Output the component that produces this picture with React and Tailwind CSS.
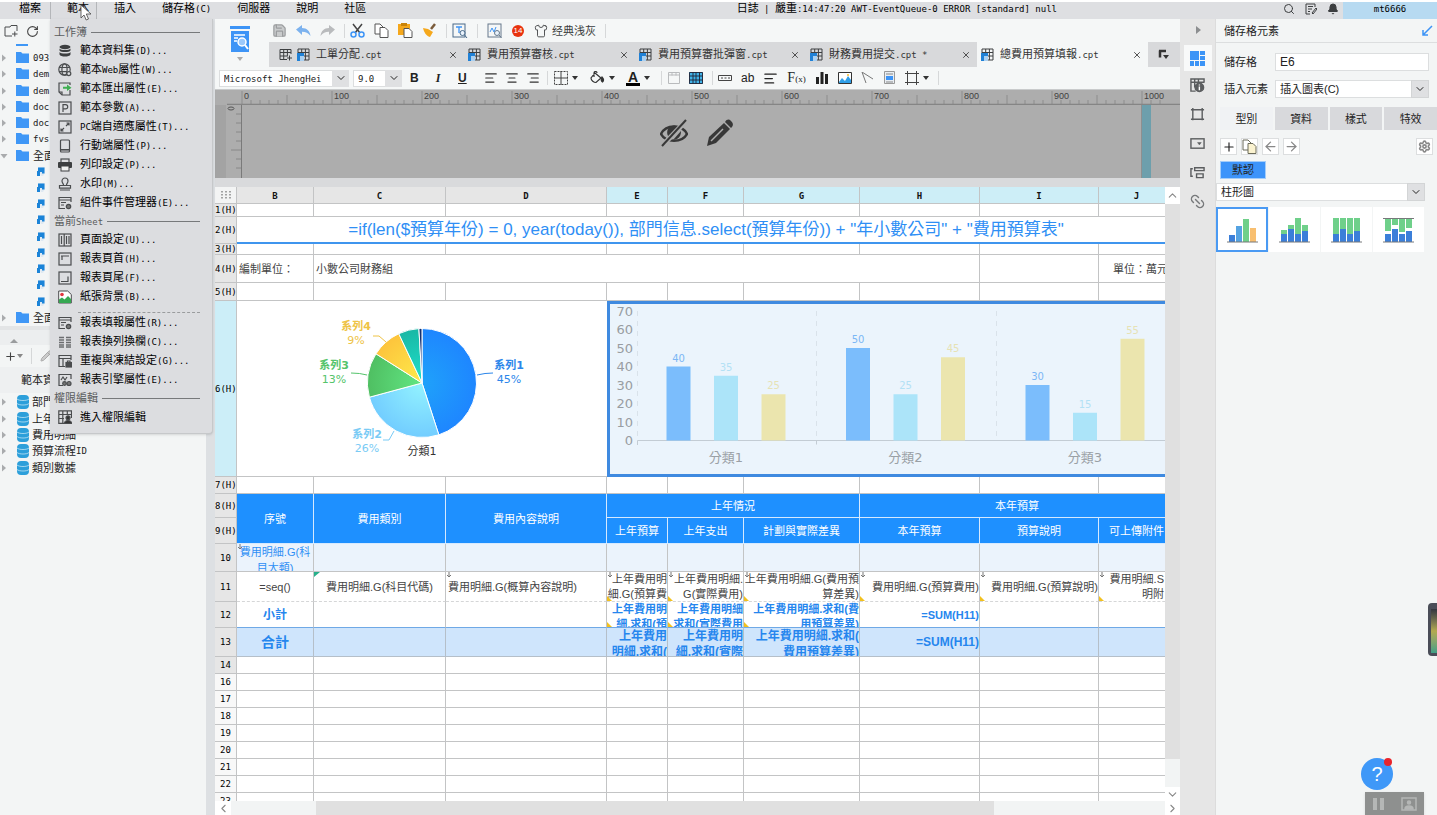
import React from 'react';
import {
  Bell, ChevronDown, ChevronLeft, ChevronRight, ChevronUp, Link2, Pencil,
  RotateCw, Save, Search, Settings, Shirt, X, Plus, ArrowLeft, ArrowRight,
  AlignLeft, AlignCenter, AlignRight,
} from 'lucide-react';

const CJK = "font-['Liberation_Sans','Noto_Sans_CJK_TC',sans-serif]";

// Latin runs are set in a narrow mono face, next to the full-width characters
function T({ children }) {
  return children.split(/([\x20-\x7e]+)/).filter(Boolean).map((part, i) =>
    /^[\x20-\x7e]/.test(part)
      ? <span key={i} className="font-['DejaVu_Sans_Mono',monospace] text-[9px] whitespace-pre">{part}</span>
      : <span key={i}>{part}</span>
  );
}

const MENUS = ['檔案', '範本', '插入', '儲存格(C)', '伺服器', '說明', '社區'];

/* ---------- menu icons ---------- */

const S = { fill: 'none', stroke: '#4a4c4e', strokeWidth: 1.2 };

const menuIcons = {
  db: <g fill="#3d3f41"><ellipse cx="7" cy="3" rx="5.5" ry="2.2" /><path d="M1.5 4.5c1 2 10 2 11 0v2c-1 2-10 2-11 0zM1.5 8c1 2 10 2 11 0v2.4c-1 2.8-10 2.8-11 0z" /></g>,
  web: <g {...S}><circle cx="6.5" cy="6.5" r="5.7" /><ellipse cx="6.5" cy="6.5" rx="2.6" ry="5.7" /><path d="M1 4.5h11M1 8.7h8" /><circle cx="10.8" cy="10.6" r="2" fill="#dcdde0" /></g>,
  export: <g><path d="M12 8v5H4l-3-3V1h11v2" {...S} /><path d="M1 10h3v3" {...S} /><path d="M5 4.7h4V2.5l4.5 3.3L9 9V6.8H5z" fill="#3fae52" /></g>,
  param: <g><rect x="1" y="1" width="12" height="12" {...S} /><path d="M5 11V3.6h2.6a2 2 0 0 1 0 4.2H5" {...S} /></g>,
  resize: <g {...S}><rect x="1" y="1" width="12" height="12" /><path d="M8 6l3-3M8.5 3H11v2.5M6 8l-3 3M3 8.5V11h2.5" /></g>,
  phone: <g {...S}><rect x="2.5" y="1" width="9" height="12" rx="1" /><path d="M2.5 10.8h9" strokeWidth="1.6" /></g>,
  print: <g><rect x="3" y="1" width="8" height="4" {...S} /><rect x="0" y="4" width="14" height="6" rx="1" fill="#3d3f41" /><rect x="3" y="8" width="8" height="5" fill="#f1f1f1" stroke="#3d3f41" /></g>,
  stamp: <g {...S}><path d="M5.5 8c0-1.4-1.5-2-1.5-4a3 3 0 0 1 6 0c0 2-1.5 2.6-1.5 4M1.5 8.5h11v2.6h-11zM2 13h10" /></g>,
  event: <g {...S}><path d="M13 6V1.5H1v11h6M1 4h12M3 6.5h5M3 9h3" /><circle cx="10.5" cy="10.5" r="2.2" fill="#777" /></g>,
  page: <g {...S}><rect x="1" y="1" width="12" height="12" /><path d="M3.5 3v8M6.2 1v12M8.5 3v8M11 3v8" /></g>,
  head: <g {...S}><rect x="1" y="1" width="12" height="12" /><path d="M3 4h8M4 4v4" /></g>,
  foot: <g {...S}><rect x="1" y="1" width="12" height="12" /><path d="M3 10.5h7.5M10 5.5v5" /></g>,
  image: <g><path d="M.7 1h9l3.6 3.5V13H.7z" fill="#fff" stroke="#4a4c4e" /><circle cx="4" cy="4.5" r="1.8" fill="#e2373f" /><path d="M1 13V9.5l3-2 2.5 2L10 6l3 3v4z" fill="#36a852" /></g>,
  cols: <g stroke="#6b6d6f" strokeWidth="1.7"><path d="M1 2.5h5M1 5h5M1 7.5h5M1 10h5M1 12h5M8 2.5h5M8 5h5M8 7.5h5M8 10h5M8 12h5" /></g>,
  freeze: <g {...S}><path d="M13 6V1.5H1v11h6M1 4.5h12M5 4.5v8" /><rect x="8" y="8.5" width="5.5" height="4.5" fill="#4a4c4e" /><path d="M9.5 8.5V7h2.5v1.5" /></g>,
  engine: <g {...S}><path d="M13 6V1.5H1v11h4M3 7l2-3 2 3 2-3" /><circle cx="6.5" cy="10.5" r="1.8" fill="#777" /><circle cx="11" cy="10.5" r="2" fill="#777" /></g>,
  auth: <g {...S}><path d="M13.5 8V.8H.8v12.5H6M.8 4.5h12.7M.8 8.5H6M4.8.8v12.5M9.3.8v4" /><circle cx="10" cy="7.8" r="2" fill="#333" /><path d="M6.5 13.5c0-4 7-4 7 0z" fill="#333" /></g>,
};

const MENU_GROUPS = [
  { title: '工作簿', items: [
    ['db', '範本資料集(D)...'], ['web', '範本Web屬性(W)...'], ['export', '範本匯出屬性(E)...'],
    ['param', '範本參數(A)...'], ['resize', 'PC端自適應屬性(T)...'], ['phone', '行動端屬性(P)...'],
    ['print', '列印設定(P)...'], ['stamp', '水印(M)...'], ['event', '組件事件管理器(E)...'],
  ] },
  { title: '當前Sheet', items: [
    ['page', '頁面設定(U)...'], ['head', '報表頁首(H)...'], ['foot', '報表頁尾(F)...'], ['image', '紙張背景(B)...'],
    null,
    ['event', '報表填報屬性(R)...'], ['cols', '報表換列換欄(C)...'], ['freeze', '重複與凍結設定(G)...'], ['engine', '報表引擎屬性(E)...'],
  ] },
  { title: '權限編輯', items: [['auth', '進入權限編輯']] },
];

function TemplateMenu() {
  return (
    <div className="absolute left-[50px] top-[19px] z-20 w-[163px] h-[415px] bg-[#dcdde0] rounded-br border-b border-r border-[#c6c8ca] pt-1 shadow-sm">
      {MENU_GROUPS.map(group => (
        <section key={group.title}>
          <h3 className="flex items-center gap-1 pl-1 pr-3 h-[18px] text-[#5a5c5e]">
            <span><T>{group.title}</T></span><span className="flex-1 h-px bg-[#77797b]" />
          </h3>
          {group.items.map((item, i) => item ? (
            <button key={i} className="flex items-center w-full h-[19px] pl-2 gap-2 text-left text-black whitespace-nowrap">
              <svg className="w-3.5 h-3.5 shrink-0" viewBox="0 0 14 14">{menuIcons[item[0]]}</svg>
              <span><T>{item[1]}</T></span>
            </button>
          ) : <div key={i} className="h-[7px] ml-7 mr-3 border-b border-dashed border-[#9a9c9e]" />)}
        </section>
      ))}
    </div>
  );
}

function MenuBar() {
  return (
    <header className="relative flex items-center h-[17px] shrink-0 mt-0.5 bg-[#dedfe2] text-black">
      <nav className="flex flex-1 pl-0.5 h-full">
        {MENUS.map((m, i) => (
          <button key={m} className={i === 1
            ? 'pl-4 pr-[7px] pb-1 leading-[13px] border-x border-[#b4b6b9] bg-[#dcdde0] whitespace-nowrap'
            : 'pl-[17px] pr-[9px] pb-1 leading-[13px] whitespace-nowrap'}><T>{m}</T></button>
        ))}
      </nav>
      <p className="leading-[13px] mb-1 mr-[226px] whitespace-nowrap"><T>{'日誌 | 嚴重:14:47:20 AWT-EventQueue-0 ERROR [standard] null'}</T></p>
      <div className="flex items-center gap-2.5 mr-1 pb-1 text-[#3c3e40]">
        <button aria-label="search"><Search size={12} /></button>
        <button aria-label="notes">
          <svg className="w-3 h-3" viewBox="0 0 12 12" fill="none" stroke="#3c3e40"><path d="M10 4V1H1v10h4M3 3.5h5M3 6h4M3 8.5h2M7 10l4-5 1 1-4 5z" /></svg>
        </button>
        <button aria-label="alerts"><Bell size={12} fill="#3c3e40" /></button>
      </div>
      <button className="w-[94px] h-full pb-1 bg-[#b7daf1] leading-[13px]"><T>mt6666</T></button>
      <svg className="absolute left-20 top-0.5 z-30 w-3 h-[18px]" viewBox="0 0 12 18"><path d="M1 1v13l3-3 2.2 5 2.3-1-2.2-5H11z" fill="#fff" stroke="#444" strokeWidth=".8" /></svg>
    </header>
  );
}

/* ---------- left ---------- */

function Twist({ open }) {
  return (
    <svg className="w-2 h-2 shrink-0" viewBox="0 0 8 8" fill="#a9abad">
      <path d={open ? 'M.5 2h7L4 6.5z' : 'M2 .5v7L6 4z'} />
    </svg>
  );
}

function Folder() {
  return <svg className="w-3.5 h-3 ml-2 mr-[3px] shrink-0" viewBox="0 0 14 12"><path d="M0 0h5l1.5 1.5H13V11H0z" fill="#3f97f6" /></svg>;
}

function Report() {
  return (
    <svg className="w-2.5 h-2.5 ml-9" viewBox="0 0 10 10">
      <path d="M2 0h7v6L7 9H5z" fill="#dfe9f2" /><path d="M2 .5h6.5v6H6V5H4v4H1V4h1z" fill="#1b84d8" />
    </svg>
  );
}

const TREE = ['093', 'dem', 'dem', 'doc', 'doc', 'fvs', '全面'];
const DATASETS = ['部門信息', '上年費用明細', '費用明細', '預算流程ID', '類別數據'];

function LeftPane() {
  return (
    <aside className="w-[206px] shrink-0 flex flex-col bg-[#f3f5f5] text-[#222]">
      <div className="flex items-center gap-2 h-6 pl-1 text-[#444]">
        <button aria-label="new folder">
          <svg className="w-3.5 h-3.5" viewBox="0 0 14 14" fill="none" stroke="#4a4c4e"><path d="M8 12H1V3h5l1-1.5h6V7M8 10h5.5M10.8 7.5v5" /></svg>
        </button>
        <button aria-label="refresh"><RotateCw size={13} /></button>
      </div>
      <div className="flex items-start h-[7px] pl-4 pt-px"><span className="w-3 h-0.5 bg-[#3f97f6]" /></div>
      <ul className="flex flex-col h-[276px]">
        {TREE.map((t, i) => (
          <li key={i} className="flex flex-1 items-center"><Twist open={i === 6} /><Folder /><T>{t}</T></li>
        ))}
        {Array.from({ length: 9 }, (_, i) => <li key={i} className="flex flex-1 items-center"><Report /></li>)}
        <li className="flex flex-1 items-center"><Twist /><Folder />全面</li>
      </ul>
      <div className="flex items-end h-[19px] pl-2.5 pb-px border-t-4 border-[#e3e5e6] bg-[#eceeef]">
        <svg className="w-2 h-1.5" viewBox="0 0 8 6"><path d="M0 5l4-4 4 4z" fill="#9a9c9e" /></svg>
      </div>
      <div className="flex items-center h-[22px] pl-1 gap-1 text-[#444]">
        <button className="flex items-center" aria-label="add dataset"><Plus size={13} /><svg className="w-1.5 h-1" viewBox="0 0 6 4"><path d="M0 0h6L3 4z" fill="#888" /></svg></button>
        <span className="w-px h-4 ml-1 mr-1 bg-[#d5d7d8]" />
        <button aria-label="edit"><Pencil size={12} color="#aaa" fill="#ccc" /></button>
      </div>
      <h2 className="h-[26px] pl-[21px] leading-[26px] bg-[#eef0f1]">範本資料集</h2>
      <ul className="flex flex-col mt-px h-[82px]">
        {DATASETS.map(d => (
          <li key={d} className="flex flex-1 items-center">
            <Twist />
            <svg className="w-3.5 h-3.5 ml-2 mr-0.5 shrink-0" viewBox="0 0 14 14">
              <rect x="1" y="0" width="12" height="14" rx="4" fill="#2c9fda" /><path d="M1 4c2 2 10 2 12 0M1 8.5c2 2 10 2 12 0" fill="none" stroke="#bfe3f4" strokeWidth=".8" />
            </svg>
            <T>{d}</T>
          </li>
        ))}
      </ul>
    </aside>
  );
}

/* ---------- toolbars ---------- */

const Sep = () => <span className="w-px h-3.5 bg-[#d6d8d9]" />;
const Caret = () => <svg className="w-1.5 h-1 ml-1" viewBox="0 0 6 4"><path d="M0 0h6L3 4z" fill="#333" /></svg>;

function CptIcon({ add }) {
  return (
    <svg className="w-[13px] h-[13px] shrink-0" viewBox="0 0 13 13">
      <path d={add ? 'M8 11.5H1v-10h11V6M1 4.5h11M1 8h7M4.7 1.5v10M8.4 1.5v7M8 10h5M10.5 7.5v5' : 'M1 1h11v11H1zM1 4.5h11M1 8h11M4.7 1v11M8.4 1v11'} fill="none" stroke="#3d3f41" />
      {!add && <path d="M0 5h7v3H3v5H0z" fill="#2081d6" />}
      {!add && <path d="M3 8h4v5H3z" fill="#a9d0f2" />}
    </svg>
  );
}

const TABS = ['工單分配.cpt', '費用預算審核.cpt', '費用預算審批彈窗.cpt', '財務費用提交.cpt *', '總費用預算填報.cpt'];

function TopTools() {
  return (
    <div className="flex h-[48px] bg-[#f5f7f7]">
      <div className="w-[54px] flex flex-col items-center pt-1.5">
        <button aria-label="preview" className="flex flex-col items-center mr-1">
          <svg className="w-5 h-7" viewBox="0 0 20 28">
            <path d="M0 1h20v3H0zM1 6h18v21H1z" fill="#3d94f6" />
            <path d="M4 10h11M4 13h4M4 16h3" stroke="#fff" strokeWidth="1.5" />
            <circle cx="12" cy="17" r="4" fill="#9cc9fb" stroke="#fff" strokeWidth="1.5" /><path d="M15 20l3 4" stroke="#fff" strokeWidth="2" />
          </svg>
          <svg className="w-1.5 h-1 mt-1" viewBox="0 0 6 4"><path d="M0 0h6L3 4z" fill="#aaa" /></svg>
        </button>
      </div>
      <div className="flex-1 min-w-0">
        <div className="flex items-center h-[23px] pl-[3px] gap-[9px] text-[#3c3e40]">
          <button aria-label="save" className="w-[15px]"><Save size={15} color="#9b9d9f" fill="#c9cbcc" /></button>
          <button aria-label="undo"><svg className="w-[15px] h-3" viewBox="0 0 15 12"><path d="M0 4.5L6 0v3c5 0 8 3 8.5 8C12 8 10 6.8 6 6.8V10z" fill="#7cb2ee" /></svg></button>
          <button aria-label="redo"><svg className="w-[15px] h-3" viewBox="0 0 15 12"><path d="M15 4.5L9 0v3C4 3 1 6 .5 11 3 8 5 6.8 9 6.8V10z" fill="#b9bbbd" /></svg></button>
          <Sep />
          <button aria-label="cut" className="-ml-1"><svg className="w-[15px] h-[15px]" viewBox="0 0 15 15" fill="none"><path d="M3 1l7 9M12 1L5 10" stroke="#444" strokeWidth="1.5" /><circle cx="3.5" cy="11.5" r="2.5" stroke="#3d94f6" strokeWidth="1.5" /><circle cx="11.5" cy="11.5" r="2.5" stroke="#3d94f6" strokeWidth="1.5" /></svg></button>
          <button aria-label="copy"><svg className="w-[15px] h-[15px]" viewBox="0 0 15 15" fill="#fff" stroke="#555"><path d="M1 1h5l3 3v7H1z" /><path d="M6 4.5h5l3 3v7H6z" /></svg></button>
          <button aria-label="paste"><svg className="w-[15px] h-[15px]" viewBox="0 0 15 15"><path d="M0 1h12v11H0z" fill="#f5a81c" /><path d="M3 0h6v3H3z" fill="#c98308" /><path d="M6 5.5h5l3 3v6H6z" fill="#fff" stroke="#555" /></svg></button>
          <button aria-label="format brush"><svg className="w-[15px] h-[15px]" viewBox="0 0 15 15"><path d="M9 6l4-5" stroke="#7a5b3a" strokeWidth="2.5" /><path d="M1 5l5 1 5 3-3 5C4 13 2 9 1 5z" fill="#f5a81c" /></svg></button>
          <Sep />
          <button aria-label="find text" className="-ml-1"><svg className="w-4 h-4" viewBox="0 0 16 16" fill="none" stroke="#4a6a8a"><rect x="1" y="1" width="12" height="13" /><path d="M4 4h6M7 4v6" stroke="#3d94f6" strokeWidth="1.3" /><circle cx="10.5" cy="10" r="2.5" fill="#eaf3fc" /><path d="M12.5 12l2.5 3" /></svg></button>
          <Sep />
          <button aria-label="diagnose"><svg className="w-4 h-4" viewBox="0 0 16 16" fill="none" stroke="#66798c"><rect x="1" y="1" width="13" height="13" /><path d="M3 9l2-4 2 4 2-5" stroke="#3d94f6" /><circle cx="10" cy="10" r="2.5" fill="#eaf3fc" /><path d="M12 12l2.5 3" /></svg></button>
          <span className="w-3 h-3 rounded-full bg-[#e8330f] text-white text-[8px] leading-3 text-center">14</span>
          <button className="flex items-center gap-1 ml-px"><Shirt size={14} strokeWidth={1.5} /><span className="whitespace-nowrap">经典浅灰</span></button>
          <Sep />
        </div>
        <div className="flex items-center h-[25px] bg-[#d8d9db] text-[#333]">
          <button className="w-6 flex justify-center pl-2" aria-label="new sheet"><CptIcon add /></button>
          {TABS.map((t, i) => (
            <div key={t} className={i === 4
              ? 'flex items-center w-[171px] h-full pl-1 pr-1.5 bg-[#f5f7f7]'
              : 'flex items-center w-[171px] h-full pl-1 pr-1.5'}>
              <CptIcon />
              <button className="flex-1 pl-1.5 text-left whitespace-nowrap"><T>{t}</T></button>
              <button aria-label="close"><X size={10} /></button>
            </div>
          ))}
          <button className="ml-2.5" aria-label="tab list"><svg className="w-3 h-3" viewBox="0 0 12 12"><path d="M1 2h7M2 1.5v7" stroke="#333" strokeWidth="2.5" /><path d="M5 6h6L8 10z" fill="#333" /></svg></button>
        </div>
      </div>
    </div>
  );
}

function FormatBar() {
  return (
    <div className="flex items-center h-[23px] pl-1 bg-[#f5f7f7] border-b border-[#c9cbcc] text-[#222]">
      <span className="relative flex">
        <select aria-label="font" className="appearance-none w-[130px] h-[17px] pl-1 border border-[#dcdedf] bg-white font-['DejaVu_Sans_Mono',monospace] text-[9px]"><option>Microsoft JhengHei</option></select>
        <span className="absolute right-0 inset-y-0 w-[17px] flex items-center justify-center bg-[#dfe0e2] pointer-events-none"><ChevronDown size={12} /></span>
      </span>
      <span className="relative flex ml-1">
        <select aria-label="font size" className="appearance-none w-[49px] h-[17px] pl-1 border border-[#dcdedf] bg-white font-['DejaVu_Sans_Mono',monospace] text-[9px]"><option>9.0</option></select>
        <span className="absolute right-0 inset-y-0 w-[17px] flex items-center justify-center bg-[#dfe0e2] pointer-events-none"><ChevronDown size={12} /></span>
      </span>
      <div className="flex items-center gap-4 ml-2 text-xs">
        <button className="w-2 font-bold">B</button>
        <button className="w-2 italic font-bold font-['Liberation_Serif',serif]">I</button>
        <button className="w-2 underline font-bold">U</button>
      </div>
      <div className="flex items-center gap-[7px] ml-[18px] text-[#333]">
        <button aria-label="align left"><AlignLeft size={14} /></button>
        <button aria-label="align center"><AlignCenter size={14} /></button>
        <button aria-label="align right"><AlignRight size={14} /></button>
        <Sep />
      </div>
      <div className="flex items-center gap-[11px] ml-1.5">
        <button className="flex items-center" aria-label="borders"><svg className="w-3.5 h-3.5" viewBox="0 0 14 14" fill="none" stroke="#444"><path d="M.5.5h13v13H.5z" strokeDasharray="2 1" /><path d="M7 0v14M0 7h14" /></svg><Caret /></button>
        <button className="flex items-center" aria-label="fill"><svg className="w-4 h-3.5" viewBox="0 0 16 14" fill="none" stroke="#333" strokeWidth="1.2"><path d="M6 2l6 5-5 4.5c-2 0-5-2-5-4.5zM5 6V2c0-2 3-2 3 0" /><path d="M13 6c2 2 2 4 .5 5C12 10 12 8 13 6z" fill="#333" /></svg><Caret /></button>
        <button className="flex items-center" aria-label="text colour"><span className="w-3.5 border-b-3 border-black text-sm leading-3 font-bold">A</span><Caret /></button>
        <Sep />
      </div>
      <div className="flex items-center gap-[9px] ml-1.5">
        <button aria-label="merge"><svg className="w-3 h-3" viewBox="0 0 12 12" fill="none" stroke="#b9bbbd"><path d="M.5.5h11v11H.5zM.5 3h11M4 .5v3M8 .5v3" /></svg></button>
        <button aria-label="table"><svg className="w-3.5 h-3" viewBox="0 0 14 12"><path d="M0 0h14v12H0z" fill="#3fb2e8" /><path d="M.5.5h13v11H.5zM.5 4h13M.5 8h13M4 .5v11M7 .5v11M10.5.5v11" fill="none" stroke="#223" strokeWidth=".9" /></svg></button>
        <Sep />
        <button aria-label="field" className="-ml-1"><svg className="w-3.5 h-1.5" viewBox="0 0 14 6" fill="none" stroke="#444"><path d="M.5.5h13v5H.5zM3 3h2M6.5 3h2M10 3h2" /></svg></button>
        <button className="text-xs leading-3">ab</button>
        <button aria-label="rich text"><AlignLeft size={15} /></button>
        <button className="font-['Liberation_Serif',serif] text-sm leading-3">F<span className="text-[9px]">(x)</span></button>
        <button aria-label="chart"><svg className="w-3.5 h-3.5" viewBox="0 0 14 14" fill="#222"><path d="M1 6h3v7H1zM5.5 1h3v12h-3zM10 3h3v10h-3z" /></svg></button>
        <button aria-label="picture"><svg className="w-3.5 h-3" viewBox="0 0 14 12"><path d="M.5.5h13v11H.5z" fill="#fff" stroke="#333" /><path d="M1 10l3-4 3 3 3-5 3 4v3H1z" fill="#2f9fe8" /><circle cx="10" cy="3" r="1" fill="#f5b72c" /></svg></button>
        <button aria-label="slope line"><svg className="w-3.5 h-3" viewBox="0 0 14 12" fill="none" stroke="#777"><path d="M1 0l11 7M1 0l4 11" /></svg></button>
        <button aria-label="sub report"><svg className="w-3 h-3.5" viewBox="0 0 12 14"><path d="M.5.5h10v12H.5z" fill="#e9eef3" stroke="#999" /><path d="M2 3h7M2 11h7" stroke="#888" /><path d="M2 5h7v4H2z" fill="#3d94f6" /></svg></button>
        <button className="flex items-center" aria-label="widget"><svg className="w-3.5 h-3.5" viewBox="0 0 14 14" fill="none" stroke="#444"><path d="M2.5 0v14M11.5 0v14M0 2.5h14M0 11.5h14" /></svg><Caret /></button>
        <Sep />
      </div>
    </div>
  );
}

/* ---------- parameter pane ---------- */

function Ruler() {
  const ticks = Array.from({ length: 103 }, (_, i) => i);
  return (
    <svg className="block w-full h-[15px]" fill="#3f3f3f">
      <path d={ticks.map(i => `M${27 + i * 9} ${i % 10 === 0 ? 1 : i % 5 === 0 ? 5 : 10}V15`).join('')} stroke="#858585" strokeWidth=".8" />
      {Array.from({ length: 11 }, (_, i) => (
        <text key={i} x={29 + i * 90} y="9" fontSize="9" fontFamily="Liberation Sans">{i * 100}</text>
      ))}
      <path d="M12 14.5H1000" stroke="#858585" strokeWidth="1.5" />
    </svg>
  );
}

function ParameterPane() {
  return (
    <div className="bg-[#adadad]">
      <Ruler />
      <div className="flex h-[73px]">
        <div className="w-[11px] bg-[#a3a3a3]" />
        <svg className="w-4 h-full" viewBox="0 0 16 73">
          <ellipse cx="5" cy="3.5" rx="3" ry="1.5" fill="none" stroke="#555" />
          <path d="M10 9h5M10 18h5M10 27h5M10 36h5M5 45h10M10 54h5M10 63h5" stroke="#888" /><path d="M15.5 0v73" stroke="#7a7a7a" />
        </svg>
        <div className="flex flex-1 justify-center gap-[18px] pt-3.5 pl-2.5 border-r border-[#8f8f8f] text-[#383838]">
          <button className="h-7" aria-label="hide">
            <svg className="w-7 h-7" viewBox="0 0 28 28"><path d="M1 15C6 5 22 5 27 15 22 24 6 24 1 15z" fill="none" stroke="#383838" strokeWidth="2.5" /><path d="M8 10c-2 4 0 8 2 9L20 9c-4-4-9-3-12 1zM17 20c3-2 4-4 4-8l-8 9z" fill="#383838" /><path d="M26 2L2 27" stroke="#adadad" strokeWidth="5" /><path d="M26 1L2 27" stroke="#383838" strokeWidth="2" /></svg>
          </button>
          <button className="h-7" aria-label="edit">
            <svg className="w-7 h-7" viewBox="0 0 28 28"><path d="M1 27l2-9L18 4l6 6L10 24z" fill="#383838" /><path d="M19 3c2-3 4-3 6-1s3 4 0 7z" fill="#383838" /><path d="M5 22L17 10" stroke="#adadad" strokeWidth="1.5" /></svg>
          </button>
        </div>
        <div className="w-[9px] mr-[29px] bg-[#6d9fac]" />
      </div>
      <div className="h-[9px] bg-[#d9dadc]" />
    </div>
  );
}

/* ---------- charts ---------- */

const SLICES = [
  { from: 0, to: 45, a: '#1fa2fa', b: '#1e86ff', name: '系列1', x: 272, y: 68, line: 'M240 74q8-2 16-2' },
  { from: 45, to: 70.8, a: '#93f3ff', b: '#72cdff', name: '系列2', x: 130, y: 137, line: 'M157 130l-5 9h-6' },
  { from: 70.8, to: 84, a: '#62e683', b: '#4fbf62', name: '系列3', x: 97, y: 68, line: 'M130 74q-7-2-16-2' },
  { from: 84, to: 93, a: '#fdeb4b', b: '#fdc43c', name: '系列4', x: 119, y: 29, line: 'M149 41l-7-6h-6' },
  { from: 93, to: 99.1, a: '#1fe0cb', b: '#19b8a5' },
  { from: 99.1, to: 100, a: '#173a8c', b: '#14306e' },
];
const LABEL_COLORS = ['#2b86ea', '#79cbf5', '#55c46b', '#eec346'];

function PieChart() {
  const cx = 185, cy = 82, r = 54.5;
  const pt = p => {
    const t = (p / 100) * Math.PI * 2;
    return `${cx + r * Math.sin(t)} ${cy - r * Math.cos(t)}`;
  };
  return (
    <svg className="block w-[369px] h-[175px]" viewBox="0 0 369 175" fontFamily="DejaVu Sans, Noto Sans CJK TC" textAnchor="middle">
      {SLICES.map((s, i) => (
        <g key={i}>
          <radialGradient id={`slice${i}`} gradientUnits="userSpaceOnUse" cx={cx} cy={cy} r={r}>
            <stop offset="0" stopColor={s.a} /><stop offset="1" stopColor={s.b} />
          </radialGradient>
          <path d={`M${cx} ${cy}L${pt(s.from)}A${r} ${r} 0 0 1 ${pt(s.to)}z`} fill={`url(#slice${i})`} stroke="#fff" />
          {s.name && (
            <g fill={LABEL_COLORS[i]} fontSize="11">
              <path d={s.line} fill="none" stroke={LABEL_COLORS[i]} />
              <text x={s.x} y={s.y} fontWeight="bold">{s.name}</text>
              <text x={s.x} y={s.y + 14}>{[45, 26, 13, 9][i]}%</text>
            </g>
          )}
        </g>
      ))}
      <text x="185" y="154" fontSize="11" fill="#333">分類1</text>
    </svg>
  );
}

const GROUPS = [[40, 35, 25], [50, 25, 45], [30, 15, 55]];
const BAR_COLORS = ['#7bbdfc', '#ace4f9', '#ebe5ae'];
const VALUE_COLORS = ['#7bb7f5', '#b3e1f5', '#e6e2b4'];

function BarChart() {
  return (
    <svg className="block w-full h-full" viewBox="3 3 565 170" preserveAspectRatio="xMinYMin slice" fontFamily="DejaVu Sans, Noto Sans CJK TC">
      <path d="M30.5 10v130M209.5 10v130M389.5 10v130" stroke="#d9e2ea" strokeDasharray="5 5" />
      <path d="M30.5 144v-4.5H568M209.5 139.5v4" fill="none" stroke="#c3ccd4" />
      {[0, 10, 20, 30, 40, 50, 60, 70].map(v => (
        <text key={v} x="26" y={144 - v * 1.85} fontSize="13" fill="#989da2" textAnchor="end">{v}</text>
      ))}
      {GROUPS.map((g, i) => (
        <g key={i} textAnchor="middle">
          {g.map((v, j) => (
            <g key={j}>
              <rect x={59.5 + i * 179.5 + j * 47.5} y={139.5 - v * 1.85} width="24" height={v * 1.85} fill={BAR_COLORS[j]} />
              <text x={71.5 + i * 179.5 + j * 47.5} y={134.5 - v * 1.85} fontSize="10" fill={VALUE_COLORS[j]}>{v}</text>
            </g>
          ))}
          <text x={119 + i * 179.5} y="161" fontSize="13" fill="#9aa0a5">{`分類${i + 1}`}</text>
        </g>
      ))}
    </svg>
  );
}

/* ---------- sheet ---------- */

const GRID = 'relative p-0 border-r border-b border-[#c3c4c5] overflow-hidden';
const HEAD = 'p-0 border-r border-b border-[#d5e9ff] bg-[#1e90ff] text-white text-center font-normal whitespace-nowrap';
const PALE = 'relative p-0 border-r border-b border-[#c3c4c5] bg-[#ebf3fc] text-[#2f8ff5] overflow-hidden';
const TOTAL = 'relative p-0 border-r border-b border-[#b5bfc9] bg-[#cfe5fc] text-[#2586ee] overflow-hidden';
const DETAIL = 'relative p-0 border-r border-b border-r-[#c3c4c5] border-b-[#d5d6d7] [border-bottom-style:dashed] overflow-hidden';
const SUB = 'relative p-0 border-r border-b border-r-[#c3c4c5] border-b-[#6fa9e6] text-[#2586ee] overflow-hidden';
const COLS = ['w-[22px]', 'w-[77px]', 'w-[132px]', 'w-[161px]', 'w-[61px]', 'w-[76px]', 'w-[116px]', 'w-[120px]', 'w-[119px]', 'w-[76px]'];

const ROW_HEADS = {
  plain: 'p-0 border-r border-b border-[#c3c4c5] bg-[#e6e6e6]',
  active: 'p-0 border-r border-b border-[#c3c4c5] bg-[#cceef8]',
  light: 'p-0 border-r border-b border-[#c3c4c5] bg-[#f8f8f8]',
};

function RowHead({ children, tone = 'plain' }) {
  return (
    <th scope="row" className={ROW_HEADS[tone]}>
      <div className="text-center text-[9px] leading-[10px] font-normal whitespace-nowrap text-black font-['DejaVu_Sans_Mono',monospace]">{children}</div>
    </th>
  );
}

function Blank({ n = 9, cell = GRID }) {
  return Array.from({ length: n }, (_, i) => <td key={i} className={cell} />);
}

const Arrow = () => <svg className="absolute left-0 top-0 w-1.5 h-1.5" viewBox="0 0 6 6" fill="none" stroke="#777"><path d="M3 0v5M1 3l2 2 2-2" /></svg>;
const Corner = () => <svg className="absolute left-0 bottom-0 w-[5px] h-[5px]" viewBox="0 0 5 5"><path d="M0 0l5 5H0z" fill="#f2c11f" /></svg>;

function Lines({ rows, className }) {
  return <div className={className}>{rows.map(r => <div key={r} className="flex justify-end whitespace-nowrap">{r}</div>)}</div>;
}

function Sheet() {
  return (
    <table className="table-fixed border-separate border-spacing-0 w-[960px] text-[#444] leading-3">
      <colgroup>{COLS.map((c, i) => <col key={i} className={c} />)}</colgroup>
      <thead>
        <tr className="h-[17px] text-[#111]">
          <th className="p-0 border-r border-b border-[#c3c4c5] bg-[#f3f4f4]">
            <svg className="block w-3 h-2 mx-auto" viewBox="0 0 12 8" stroke="#888" strokeWidth="1.5" strokeDasharray="1.5 1.5"><path d="M2 0v8M6 0v8M10 0v8" /></svg>
          </th>
          {'BCDEFGHIJ'.split('').map((c, i) => (
            <th key={c} className={i > 2
              ? 'p-0 border-r border-b border-[#c3c4c5] bg-[#cdeef7]'
              : 'p-0 border-r border-b border-[#c3c4c5] bg-[#e6e6e6]'}><T>{c}</T></th>
          ))}
        </tr>
      </thead>
      <tbody>
        <tr className="h-[13px]"><RowHead>1(H)</RowHead><Blank /></tr>
        <tr className="h-[27px]">
          <RowHead>2(H)</RowHead>
          <td colSpan={9} className="p-0 border-b-2 border-[#3f95ee] text-center text-[17px] leading-6 text-[#2f8ff5] whitespace-nowrap">
            {'=if(len($預算年份) = 0, year(today()), 部門信息.select(預算年份)) + "年小數公司" + "費用預算表"'}
          </td>
        </tr>
        <tr className="h-[11px]"><RowHead>3(H)</RowHead><Blank /></tr>
        <tr className="h-[28px]">
          <RowHead>4(H)</RowHead>
          <td className={GRID}><div className="pl-0.5">編制單位：</div></td>
          <td colSpan={6} className={GRID}><div className="pl-0.5">小數公司財務組</div></td>
          <td className={GRID} />
          <td className={GRID}><div className="flex justify-end pr-1.5 whitespace-nowrap">單位：萬元</div></td>
        </tr>
        <tr className="h-[18px]"><RowHead>5(H)</RowHead><Blank /></tr>
        <tr className="h-[176px]">
          <RowHead tone="active">6(H)</RowHead>
          <td colSpan={3} className="p-0 border-b border-[#c3c4c5] bg-white"><PieChart /></td>
          <td colSpan={6} className="p-0"><div className="h-[176px] border-3 border-r-0 border-[#3f8ae0] bg-[#ebf4fc]"><BarChart /></div></td>
        </tr>
        <tr className="h-[17px]"><RowHead>7(H)</RowHead><Blank /></tr>
        <tr className="h-[24px]">
          <RowHead>8(H)</RowHead>
          <td rowSpan={2} className={HEAD}>序號</td>
          <td rowSpan={2} className={HEAD}>費用類別</td>
          <td rowSpan={2} className={HEAD}>費用內容說明</td>
          <td colSpan={3} className={HEAD}>上年情況</td>
          <td colSpan={3} className={HEAD}>本年預算</td>
        </tr>
        <tr className="h-[26px]">
          <RowHead>9(H)</RowHead>
          {['上年預算', '上年支出', '計劃與實際差異', '本年預算', '預算說明', '可上傳附件'].map((h, i) => <td key={i} className={HEAD}>{h}</td>)}
        </tr>
        <tr className="h-[28px]">
          <RowHead>10</RowHead>
          <td className={PALE}><Arrow /><div className="h-[27px] overflow-hidden text-center leading-4 whitespace-nowrap">費用明細.G(科<br />目大類)</div></td>
          <Blank n={8} cell={PALE} />
        </tr>
        <tr className="h-[30px]">
          <RowHead>11</RowHead>
          <td className={DETAIL}><div className="text-center">=seq()</div></td>
          <td className={DETAIL}><svg className="absolute left-0 top-0 w-1.5 h-1.5" viewBox="0 0 6 6"><path d="M0 0h6L0 5z" fill="#27b08b" /></svg><div className="text-center">費用明細.G(科目代碼)</div></td>
          <td className={DETAIL}><Arrow /><div className="pl-0.5 whitespace-nowrap">費用明細.G(概算內容說明)</div></td>
          {[['上年費用明', '細.G(預算費'], ['上年費用明細.', 'G(實際費用)'], ['上年費用明細.G(費用預', '算差異)']].map((rows, i) => (
            <td key={i} className={DETAIL}><Arrow /><Corner /><Lines rows={rows} className="h-[29px] overflow-hidden leading-[15px]" /></td>
          ))}
          <td className={DETAIL}><Arrow /><Corner /><Lines rows={['費用明細.G(預算費用)']} /></td>
          <td className={DETAIL}><Arrow /><Corner /><Lines rows={['費用明細.G(預算說明)']} /></td>
          <td className={DETAIL}><Arrow /><Corner /><Lines rows={['費用明細.S', '明附']} className="h-[29px] overflow-hidden pr-2.5 leading-[15px]" /></td>
        </tr>
        <tr className="h-[26px] font-bold">
          <RowHead>12</RowHead>
          <td className={SUB}><div className="text-center text-xs">小計</div></td>
          <Blank n={2} cell={SUB} />
          {[['上年費用明', '細.求和(預'], ['上年費用明細', '求和(實際費用'], ['上年費用明細.求和(費', '用預算差異)']].map((rows, i) => (
            <td key={i} className={SUB}><Corner /><Lines rows={rows} className="h-[25px] overflow-hidden leading-[15px]" /></td>
          ))}
          <td className={SUB}><Lines rows={['=SUM(H11)']} /></td>
          <Blank n={2} cell={SUB} />
        </tr>
        <tr className="h-[29px] font-bold">
          <RowHead>13</RowHead>
          <td className={TOTAL}><div className="text-center text-sm">合計</div></td>
          <Blank n={2} cell={TOTAL} />
          {[['上年費用', '明細.求和('], ['上年費用明', '細.求和(實際'], ['上年費用明細.求和(', '費用預算差異)']].map((rows, i) => (
            <td key={i} className={TOTAL}><Lines rows={rows} className="h-[28px] overflow-hidden text-xs leading-4" /></td>
          ))}
          <td className={TOTAL}><Lines rows={['=SUM(H11)']} className="text-xs" /></td>
          <Blank n={2} cell={TOTAL} />
        </tr>
        {['14', '16', '17', '18', '19', '20', '21', '22', '23'].map(n => (
          <tr key={n} className="h-[17px]"><RowHead tone={n === '14' ? 'plain' : 'light'}>{n}</RowHead><Blank /></tr>
        ))}
      </tbody>
    </table>
  );
}

function Designer() {
  return (
    <main className="flex-1 min-w-0 flex flex-col bg-white">
      <TopTools />
      <FormatBar />
      <ParameterPane />
      <div className="flex flex-1 min-h-0">
        <div className="flex-1 min-w-0 overflow-hidden bg-white"><Sheet /></div>
        <div className="w-[15px] flex flex-col bg-[#f2f4f4] text-[#888]">
          <button className="h-[17px] flex items-center justify-center bg-white" aria-label="up"><ChevronUp size={13} /></button>
          <div className="flex-1 bg-[#e0e0e0]" />
          <div className="h-7" />
          <button className="h-3.5 flex items-center justify-center bg-white" aria-label="down"><ChevronDown size={13} /></button>
        </div>
      </div>
      <div className="flex h-3.5 bg-[#f2f4f4] text-[#888]">
        <button className="w-4 flex items-center justify-center bg-white" aria-label="left"><ChevronLeft size={13} /></button>
        <div className="ml-[85px] w-[678px] bg-[#e0e0e0]" />
        <button className="w-[15px] ml-auto flex items-center justify-center bg-white" aria-label="right"><ChevronRight size={13} /></button>
      </div>
    </main>
  );
}

/* ---------- right ---------- */

function SideStrip() {
  const g = { fill: 'none', stroke: '#5b5d5f', strokeWidth: 1.5 };
  return (
    <div className="w-9 shrink-0 flex flex-col items-center bg-[#e6e6e6] border-r border-[#dcdcdc]">
      <button className="h-[22px]" aria-label="collapse"><svg className="w-2 h-2" viewBox="0 0 8 8"><path d="M2 0l5 4-5 4z" fill="#8c8e90" /></svg></button>
      <button className="w-7 h-[26px] mt-1 flex items-center justify-center bg-[#f8f9f9]" aria-label="cell element">
        <svg className="w-[15px] h-[15px]" viewBox="0 0 15 15" fill="#3d94f6"><path d="M0 0h9v9H0zM10 0h5v4h-5zM10 5h5v4h-5zM0 10h4v5H0zM5 10h4v5H5zM10 10h5v5h-5z" /></svg>
      </button>
      {[
        <g key="a" {...g}><path d="M15 5V1H1v13h5M1 4.5h14M5 1v9M9 1v4" /><circle cx="10" cy="10" r="4.5" fill="#5b5d5f" /><path d="M10 9v4M10 7v1" stroke="#fff" /></g>,
        <g key="b" {...g}><path d="M3 1v13M13 1v13M1 3h14M1 13h14" /></g>,
        <g key="c" {...g}><rect x="1" y="3" width="14" height="10" /><path d="M8 7h4l-2 2.5z" fill="#5b5d5f" strokeWidth=".5" /></g>,
        <g key="d" {...g}><path d="M3 4H1v8h2M5 3h10v3H5zM7 9.5h7v4H7z" /></g>,
      ].map((icon, i) => (
        <button key={i} className="h-[29px]"><svg className="w-[15px] h-[15px]" viewBox="0 0 16 16">{icon}</svg></button>
      ))}
      <button className="h-[29px] text-[#77797b]" aria-label="hyperlink"><Link2 size={17} className="rotate-45" /></button>
    </div>
  );
}

const TYPES = [
  { base: 'M1 26h31', bars: [['#3b7fd9', 3, 19, 7], ['#55a3e2', 10, 10, 16], ['#6fd08a', 17, 3, 23], ['#f8bf70', 24, 12, 14]] },
  { base: 'M1 26h31', bars: [['#3b7fd9', 3, 18, 8], ['#6fd08a', 3, 14, 4], ['#3b7fd9', 10, 13, 13], ['#6fd08a', 10, 9, 4], ['#3b7fd9', 17, 18, 8], ['#6fd08a', 17, 2, 16], ['#3b7fd9', 24, 15, 11], ['#6fd08a', 24, 9, 6]] },
  { base: 'M1 26h31', bars: [['#3b7fd9', 3, 18, 8], ['#6fd08a', 3, 2, 16], ['#3b7fd9', 10, 13, 13], ['#6fd08a', 10, 2, 11], ['#3b7fd9', 17, 18, 8], ['#6fd08a', 17, 2, 16], ['#3b7fd9', 24, 15, 11], ['#6fd08a', 24, 2, 13]] },
  { base: 'M1 26h31M1 2.5h31', bars: [['#3b7fd9', 3, 18, 8], ['#6fd08a', 3, 3, 12], ['#3b7fd9', 10, 13, 13], ['#6fd08a', 10, 3, 6], ['#3b7fd9', 17, 18, 8], ['#6fd08a', 17, 3, 13], ['#3b7fd9', 24, 15, 11], ['#6fd08a', 24, 3, 9]] },
];

const SMALL_BTN = 'w-[17px] h-[17px] flex items-center justify-center bg-white border border-[#dcdedf]';

function RightPane() {
  return (
    <aside className="w-[221px] shrink-0 bg-[#f3f5f5] text-[#222]">
      <div className="flex items-center justify-between h-6 pl-2 pr-1 border-b border-[#dcdedf]">
        <h2>儲存格元素</h2>
        <svg className="w-3 h-3" viewBox="0 0 12 12" fill="none" stroke="#3d94f6" strokeWidth="1.5"><path d="M11 1L2 10M2 5v5h5" /></svg>
      </div>
      <div className="grid grid-cols-[51px_1fr] gap-y-[9px] items-center mt-2.5 pl-2 pr-2">
        <label htmlFor="cell">儲存格</label>
        <input id="cell" defaultValue="E6" className="h-[18px] min-w-0 px-1 bg-white border border-[#dcdedf] text-xs" />
        <label htmlFor="insert">插入元素</label>
        <span className="relative flex">
          <select id="insert" className="appearance-none w-full h-[18px] px-1 bg-white border border-[#dcdedf]"><option>插入圖表(C)</option></select>
          <span className="absolute right-0 inset-y-0 w-[18px] flex items-center justify-center bg-[#dfe0e2] border border-[#d3d5d6] pointer-events-none"><ChevronDown size={12} /></span>
        </span>
      </div>
      <div className="grid grid-cols-4 gap-0.5 mt-[9px] pl-1">
        {['型別', '資料', '樣式', '特效'].map((t, i) => (
          <button key={t} className={i === 0 ? 'h-[23px] bg-[#f0f2f4]' : 'h-[23px] bg-[#d8d9dc]'}>{t}</button>
        ))}
      </div>
      <div className="flex items-center gap-1 mt-2 pl-1 pr-1 text-[#888]">
        <button className={SMALL_BTN} aria-label="add"><Plus size={14} color="#222" /></button>
        <button className={SMALL_BTN} aria-label="copy"><svg className="w-[15px] h-[15px]" viewBox="0 0 15 15" fill="#fff" stroke="#6b6b5a"><path d="M1 1h5l3 3v7H1z" /><path d="M6 4.5h5l3 3v7H6z" fill="#fbf3d0" /></svg></button>
        <button className={SMALL_BTN} aria-label="back"><ArrowLeft size={15} /></button>
        <button className={SMALL_BTN} aria-label="forward"><ArrowRight size={15} /></button>
        <button className="w-[17px] h-[17px] flex items-center justify-center bg-white border border-[#dcdedf] ml-auto" aria-label="settings"><Settings size={13} strokeWidth={3} /></button>
      </div>
      <button className="block w-[46px] h-[18px] ml-1 mt-1.5 bg-[#3d94fa] border border-[#a5cdf9]">默認</button>
      <div className="relative flex mt-1 mr-3">
        <select aria-label="chart type" className="appearance-none w-full h-[18px] px-1 bg-white border border-[#dcdedf]"><option>柱形圖</option></select>
        <span className="absolute right-0 inset-y-0 w-[18px] flex items-center justify-center bg-[#dfe0e2] border border-[#d3d5d6] pointer-events-none"><ChevronDown size={12} /></span>
      </div>
      <div className="flex gap-px mt-1.5">
        {TYPES.map((t, i) => (
          <button key={i} aria-label={`bar style ${i + 1}`} className={i === 0
            ? 'w-[52px] h-[45px] flex items-center justify-center bg-white border-2 border-[#4a9af3]'
            : 'w-[51px] h-[45px] flex items-center justify-center bg-white'}>
            <svg className="w-[33px] h-7" viewBox="0 0 33 28">
              {t.bars.map(([fill, x, y, h], j) => <rect key={j} x={x} y={y} width="6" height={h} fill={fill} />)}
              <path d={t.base} stroke="#77797b" />
            </svg>
          </button>
        ))}
      </div>
    </aside>
  );
}

function Floating() {
  return (
    <>
      <div className="absolute right-0 bottom-[159px] w-[9px] h-[53px] rounded-l bg-[#4a4d58] p-[3px] pr-0 pt-1.5">
        <div className="h-full bg-gradient-to-b from-[#33363f] via-[#b3a94e] to-[#3f9f86]" />
      </div>
      <button className="absolute right-11 bottom-[25px] w-8 h-8 rounded-full bg-[#3f98f8] text-white text-xl leading-8 text-center">?
        <span className="absolute right-px top-0 w-2 h-2 rounded-full bg-[#e8252c]" />
      </button>
      <div className="absolute right-[13px] bottom-0 w-[59px] h-[23px] flex items-center justify-around bg-[#8e908f] shadow">
        <button aria-label="pause"><svg className="w-3.5 h-3.5" viewBox="0 0 14 14" fill="#b5b7b6"><path d="M1 1h4v12H1zM8 1h4v12H8z" /></svg></button>
        <button aria-label="screen"><svg className="w-4 h-3.5" viewBox="0 0 16 14" fill="none" stroke="#b5b7b6" strokeWidth="1.5"><path d="M1 1h14v12H1z" /><path d="M4 12c0-4 8-4 8 0z" fill="#b5b7b6" /><circle cx="8" cy="5.5" r="1.5" fill="#b5b7b6" /></svg></button>
      </div>
    </>
  );
}

export default function App() {
  return (
    <div className={`relative flex flex-col h-screen overflow-hidden bg-white text-[11px] leading-4 ${CJK}`}>
      <MenuBar />
      <div className="flex flex-1 min-h-0">
        <LeftPane />
        <div className="w-[9px] shrink-0 bg-[#dde0e3]" />
        <Designer />
        <SideStrip />
        <RightPane />
      </div>
      <TemplateMenu />
      <Floating />
    </div>
  );
}
